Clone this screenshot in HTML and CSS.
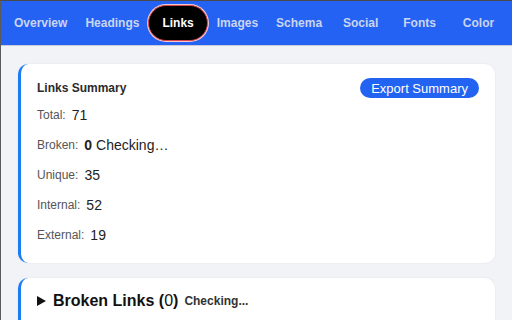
FILE: index.html
```html
<!DOCTYPE html>
<html lang="en">
<head>
    <meta charset="UTF-8">
    <meta name="viewport" content="width=device-width, initial-scale=1.0">
    <title>SEO Inspector - Links</title>
    <link rel="stylesheet" href="styles.css">
</head>
<body>
    <nav class="tabs">
        <a class="tab">Overview</a>
        <a class="tab">Headings</a>
        <a class="tab active">Links</a>
        <a class="tab">Images</a>
        <a class="tab">Schema</a>
        <a class="tab">Social</a>
        <a class="tab">Fonts</a>
        <a class="tab">Color</a>
    </nav>

    <main class="content">
        <section class="card">
            <div class="card-header">
                <h2>Links Summary</h2>
                <button class="btn">Export Summary</button>
            </div>
            <div class="stat"><span class="label">Total:</span> <span class="value">71</span></div>
            <div class="stat"><span class="label">Broken:</span> <span class="value"><b>0</b> Checking…</span></div>
            <div class="stat"><span class="label">Unique:</span> <span class="value">35</span></div>
            <div class="stat"><span class="label">Internal:</span> <span class="value">52</span></div>
            <div class="stat"><span class="label">External:</span> <span class="value">19</span></div>
        </section>

        <section class="card">
            <details class="group">
                <summary>
                    <svg class="caret" width="9" height="10" viewBox="0 0 9 10"><path d="M0 0 L9 5 L0 10 Z" fill="#111"/></svg>
                    <span class="group-title">Broken Links <span class="count">(<span class="num">0</span>)</span></span>
                    <span class="status">Checking...</span>
                </summary>
            </details>
        </section>
    </main>
</body>
</html>
```

FILE: styles.css
```css
html, body {
    margin: 0;
    padding: 0;
}
body {
    font-family: 'Liberation Sans', Arial, sans-serif;
    color: #333;
    background-color: #f2f3f7;
    border-top: 1px solid #4a4a4a;
    border-left: 1px solid #5a5a5a;
    min-height: 319px;
    box-sizing: border-box;
}
.tabs {
    display: flex;
    align-items: center;
    height: 44px;
    padding: 0 4px;
    background-color: #2362f3;
    border-bottom: 1px solid #c9ccd4;
}
.tab {
    flex: 1 1 0;
    padding: 9px 9px;
    text-align: center;
    font-size: 12px;
    font-weight: bold;
    color: #cbd5ef;
    white-space: nowrap;
    cursor: pointer;
}
.tab.active {
    flex: 0 0 auto;
    padding: 10px 13px;
    background-color: #000;
    color: #fff;
    border-radius: 18px;
    border: 1px solid #d9434b;
    box-shadow: 0 0 0 1px #f4c9cc;
}
.content {
    padding: 18px 17px 0 17px;
}
.card {
    background-color: #fff;
    border-left: 3px solid #1a7cf7;
    border-radius: 10px;
    box-shadow: 0 0 2px rgba(0,0,0,0.08);
    padding: 14px 16px 13px 16px;
    margin-bottom: 15px;
}
.card-header {
    display: flex;
    justify-content: space-between;
    align-items: center;
    height: 20px;
    margin-bottom: 2px;
}
.card-header h2 {
    margin: 0;
    font-size: 12px;
    font-weight: bold;
    color: #2b2b2b;
}
.btn {
    font-family: inherit;
    font-size: 13px;
    color: #fff;
    background-color: #2363f2;
    border: none;
    border-radius: 10px;
    height: 20px;
    padding: 0 11px;
    cursor: pointer;
}
.stat {
    height: 30px;
    display: flex;
    align-items: center;
    gap: 6px;
}
.label {
    font-size: 12px;
    color: #555;
}
.value {
    font-size: 14px;
    color: #222;
}
.group summary {
    list-style: none;
    display: flex;
    align-items: center;
    height: 18px;
    padding-bottom: 20px;
    cursor: pointer;
}
.caret {
    margin: 0 7px 0 0;
}
.group-title {
    font-size: 16px;
    font-weight: bold;
    color: #111;
}
.count .num {
    font-weight: normal;
}
.status {
    font-size: 12px;
    font-weight: bold;
    color: #333;
    margin-left: 6px;
}
```
